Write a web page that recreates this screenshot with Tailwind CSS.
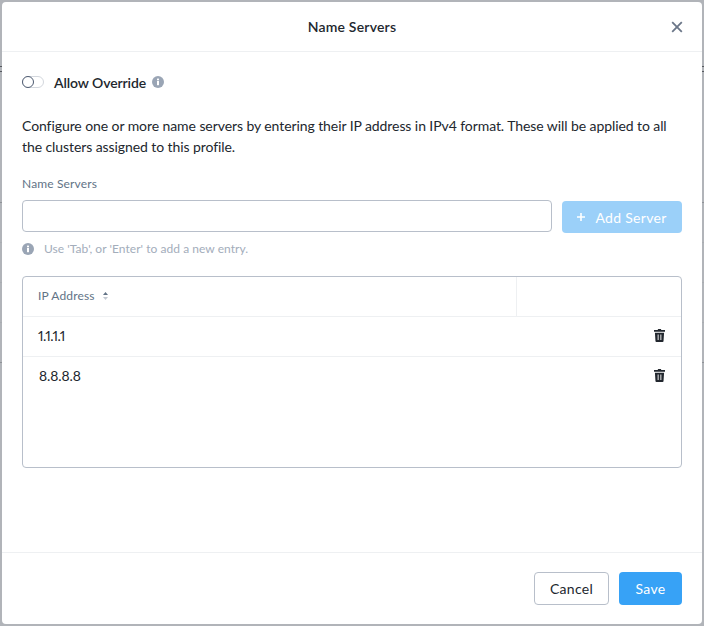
<!DOCTYPE html>
<html>
<head>
<meta charset="utf-8">
<script src="https://cdn.jsdelivr.net/npm/@tailwindcss/browser@4"></script>
</head>
<body class="relative w-[704px] h-[626px] overflow-hidden bg-[#b1b4b9] font-['Lato',sans-serif]">
<!-- Page behind the modal, only visible at the edges -->
<div class="absolute left-0 top-[66px] w-full h-[6px] border-y border-[#55595f]"></div>
<div class="absolute left-0 top-[202px] w-full h-px bg-[#8f9297]"></div>
<div class="absolute left-0 top-[242px] w-full h-px bg-[#a9acb1]"></div>
<div class="absolute left-0 top-[282px] w-full h-px bg-[#a9acb1]"></div>
<div class="absolute left-0 top-[322px] w-full h-px bg-[#a9acb1]"></div>
<div class="absolute left-0 top-[362px] w-full h-px bg-[#8f9297]"></div>

<!-- Modal -->
<div class="relative m-[2px] w-[700px] h-[622px] bg-white rounded-[4px] flex flex-col text-[#22272e]">
    <!-- Header -->
    <div class="relative h-[49px] shrink-0 border-b border-[#eef0f2] flex items-center justify-center box-content">
        <span class="text-[14px] font-semibold tracking-[0.2px]">Name Servers</span>
        <button class="absolute right-[19px] top-[19px] text-[#6b7688]">
            <svg class="w-[12px] h-[12px] block" viewBox="0 0 12 12" fill="none" stroke="currentColor" stroke-width="1.8"><path d="M1.2 1.2l9.6 9.6M10.8 1.2l-9.6 9.6"/></svg>
        </button>
    </div>

    <!-- Body -->
    <div class="flex-1 px-[20px] flex flex-col">
        <!-- Allow Override -->
        <div class="flex items-center mt-[23px] h-[14px]">
            <span class="relative w-[22px] h-[12px] rounded-full border border-[#d3d7dd] bg-white">
                <span class="absolute left-[-1px] top-[-1px] w-[12px] h-[12px] rounded-full border border-[#4d5a70] bg-white"></span>
            </span>
            <span class="ml-[10px] text-[14px] font-semibold tracking-[-0.1px]">Allow Override</span>
            <svg class="ml-[6px] w-[12px] h-[12px]" viewBox="0 0 12 12"><circle cx="6" cy="6" r="6" fill="#9aa5b5"/><rect x="5" y="5" width="2" height="4.2" fill="#fff"/><rect x="5" y="2.6" width="2" height="1.7" fill="#fff"/></svg>
        </div>

        <p class="mt-[26px] w-[655px] text-[14px] leading-[21px] tracking-[-0.08px]">Configure one or more name servers by entering their IP address in IPv4 format. These will be applied to all the clusters assigned to this profile.</p>

        <label class="mt-[20px] text-[12px] leading-[14px] text-[#627386] tracking-[0.15px]">Name Servers</label>

        <!-- Input row -->
        <div class="mt-[9px] flex items-start">
            <input class="w-[530px] h-[32px] rounded-[4px] border border-[#b8bfca] bg-white">
            <button class="ml-[10px] mt-[1px] w-[120px] h-[32px] rounded-[4px] bg-[#9bd0f9] text-white text-[14px] tracking-[0.3px] flex items-center justify-center">
                <svg class="w-[8px] h-[8px] mr-[10px]" viewBox="0 0 8 8" fill="none" stroke="currentColor" stroke-width="1.6"><path d="M4 0v8M0 4h8"/></svg>
                Add Server
            </button>
        </div>

        <!-- Hint -->
        <div class="mt-[9px] flex items-center h-[14px]">
            <svg class="w-[12px] h-[12px]" viewBox="0 0 12 12"><circle cx="6" cy="6" r="6" fill="#9aa5b5"/><rect x="5" y="5" width="2" height="4.2" fill="#fff"/><rect x="5" y="2.6" width="2" height="1.7" fill="#fff"/></svg>
            <span class="ml-[10px] text-[12px] text-[#a3adbb] tracking-[0.05px]">Use 'Tab', or 'Enter' to add a new entry.</span>
        </div>

        <!-- Table -->
        <div class="mt-[20px] w-[660px] h-[192px] rounded-[4px] border border-[#b8bfca]">
            <div class="flex h-[40px] border-b border-[#eef0f2]">
                <div class="w-[494px] border-r border-[#eef0f2] pl-[15px] pb-[2px] flex items-center text-[12px] text-[#627386] tracking-[0.15px]">
                    IP Address
                    <svg class="ml-[8px] w-[5px] h-[8px]" viewBox="0 0 5 8"><path d="M2.5 0L5 3H0z" fill="#627386"/><path d="M2.5 8L0 5h5z" fill="#c3c9d2"/></svg>
                </div>
            </div>
            <div class="flex items-center justify-between h-[40px] border-b border-[#eef0f2] pl-[15px] pr-[16px] text-[14px]">
                <span class="mb-[2px] proportional-nums tracking-[-0.5px]">1.1.1.1</span>
                <svg class="w-[11px] h-[13px] mt-[-3px]" viewBox="0 0 12 14" fill="#22272e"><path d="M4.500 0h3l.5 1H12v2H0V1h4zM1 4h10l-.6 9a1 1 0 0 1-1 1H2.600a1 1 0 0 1-1-1z"/><path d="M4 6h1v6H4zM7 6h1v6H7z" fill="#fff"/></svg>
            </div>
            <div class="flex items-center justify-between h-[39px] pl-[16px] pr-[16px] text-[14px]">
                <span class="mb-[2px] tracking-[-0.1px]">8.8.8.8</span>
                <svg class="w-[11px] h-[13px] mt-[-3px]" viewBox="0 0 12 14" fill="#22272e"><path d="M4.500 0h3l.5 1H12v2H0V1h4zM1 4h10l-.6 9a1 1 0 0 1-1 1H2.600a1 1 0 0 1-1-1z"/><path d="M4 6h1v6H4zM7 6h1v6H7z" fill="#fff"/></svg>
            </div>
        </div>
    </div>

    <!-- Footer -->
    <div class="h-[71px] shrink-0 border-t border-[#eef0f2] px-[20px] flex items-center justify-end box-content">
        <button class="w-[75px] h-[33px] rounded-[4px] border border-[#b8bfca] bg-white text-[14px] tracking-[0.3px]">Cancel</button>
        <button class="ml-[10px] w-[63px] h-[33px] rounded-[4px] bg-[#37a2f6] text-white text-[14px] tracking-[0.3px]">Save</button>
    </div>
</div>
</body>
</html>
